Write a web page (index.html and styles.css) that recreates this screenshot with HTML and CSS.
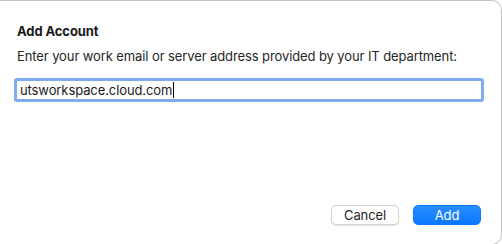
FILE: index.html
```html
<!DOCTYPE html>
<html>
<head>
<meta charset="utf-8">
<link rel="stylesheet" href="styles.css">
</head>
<body>
<div class="sheet">
  <div class="title">Add Account</div>
  <div class="prompt">Enter your work email or server address provided by your IT department:</div>
  <div class="field"><span class="value">utsworkspace.cloud.com</span><span class="caret"></span></div>
  <div class="actions">
    <button class="btn btn-cancel">Cancel</button>
    <button class="btn btn-add">Add</button>
  </div>
</div>
</body>
</html>
```
FILE: styles.css
```css
html, body {
  margin: 0;
  padding: 0;
  background: #ffffff;
}
body {
  width: 502px;
  height: 244px;
  overflow: hidden;
  font-family: Inter, "Liberation Sans", Arial, sans-serif;
  font-size: 13px;
  letter-spacing: -0.1px;
  color: #1f1f1f;
}
.sheet {
  box-sizing: border-box;
  width: 502px;
  height: 245px;
  border-top: 1px solid #c6c6c6;
  border-right: 1px solid #c6c6c6;
  border-bottom: 1px solid #c6c6c6;
  border-top-right-radius: 10px;
  border-bottom-right-radius: 10px;
  background: #ffffff;
  padding: 22px 20px 0 17px;
  display: flex;
  flex-direction: column;
}
.title {
  font-weight: 700;
  line-height: 16px;
  color: #1a1a1a;
}
.prompt {
  margin-top: 9px;
  line-height: 16px;
  color: #262626;
}
.field {
  margin-top: 14px;
  margin-left: -3px;
  width: 470px;
  height: 24px;
  box-sizing: border-box;
  border: 3px solid #7eaaf1;
  border-radius: 3px;
  padding-left: 3px;
  display: flex;
  align-items: center;
  line-height: 18px;
  color: #1a1a1a;
}
.caret {
  display: inline-block;
  width: 1px;
  height: 16px;
  background: #000;
  margin-left: 1px;
}
.actions {
  margin-top: 103px;
  display: flex;
  justify-content: flex-end;
  gap: 14px;
}
.btn {
  box-sizing: border-box;
  width: 68px;
  height: 20px;
  border-radius: 5px;
  font-family: Inter, "Liberation Sans", Arial, sans-serif;
  font-size: 13px;
  letter-spacing: -0.1px;
  line-height: 18px;
  padding: 0;
  margin: 0;
}
.btn-cancel {
  background: #ffffff;
  border: 1px solid #d4d4d4;
  box-shadow: 0 0.5px 1px rgba(0,0,0,0.12);
  color: #262626;
}
.btn-add {
  background: linear-gradient(#2a8cff, #0a78fe);
  border: 1px solid #0a78fe;
  color: #ffffff;
}
```
